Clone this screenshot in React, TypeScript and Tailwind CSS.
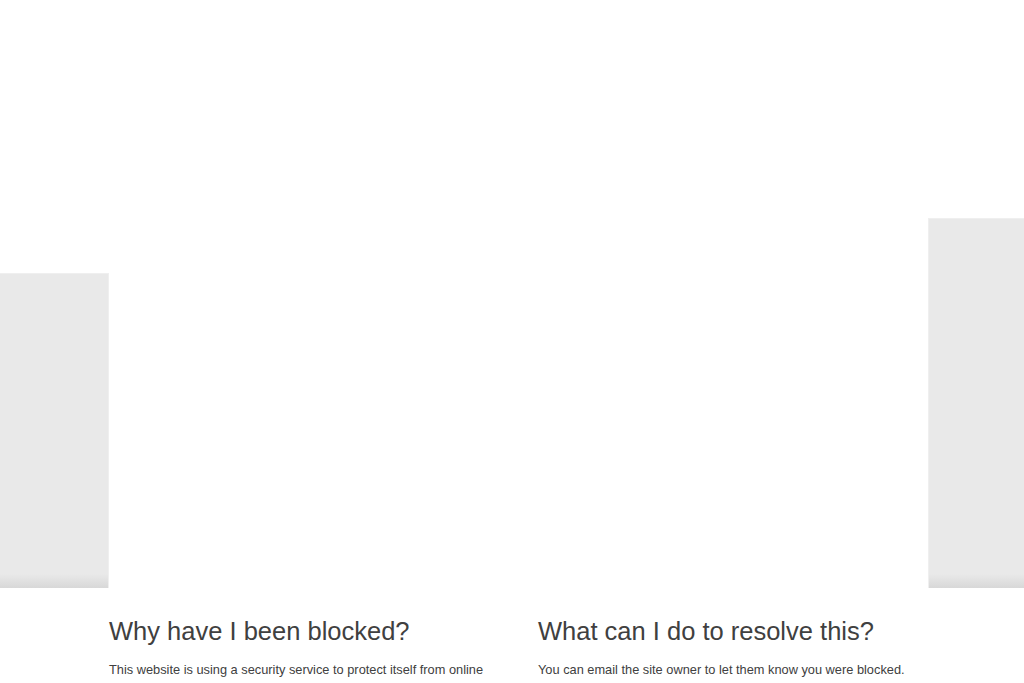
export default function App() {
  return (
    <div className="min-h-screen bg-white font-['Liberation_Sans',Arial,sans-serif] text-[#404040]">
      <div className="flex h-[588px] items-end">
        <div className="h-[315px] w-[109px] border-r border-t border-[#efefef] bg-[linear-gradient(to_bottom,#e9e9e9_calc(100%-14px),#d8d8d8)]" />
        <div className="h-full flex-1 bg-white" />
        <div className="h-[370px] w-[96px] border-l border-t border-[#efefef] bg-[linear-gradient(to_bottom,#e9e9e9_calc(100%-14px),#d8d8d8)]" />
      </div>
      <div className="flex px-[109px] pt-[28px]">
        <div className="w-[429px] pr-5">
          <h2 className="text-[25.5px] leading-[1.2] font-normal">Why have I been blocked?</h2>
          <p className="mt-[13px] text-[12.8px] leading-[1.5]">
            This website is using a security service to protect itself from online attacks. The action you just
            performed triggered the security solution.
          </p>
        </div>
        <div className="flex-1">
          <h2 className="text-[25.5px] leading-[1.2] font-normal">What can I do to resolve this?</h2>
          <p className="mt-[13px] text-[12.8px] leading-[1.5]">
            You can email the site owner to let them know you were blocked. Please include what you were doing
            when this page came up and the Cloudflare Ray ID found at the bottom of this page.
          </p>
        </div>
      </div>
    </div>
  );
}
